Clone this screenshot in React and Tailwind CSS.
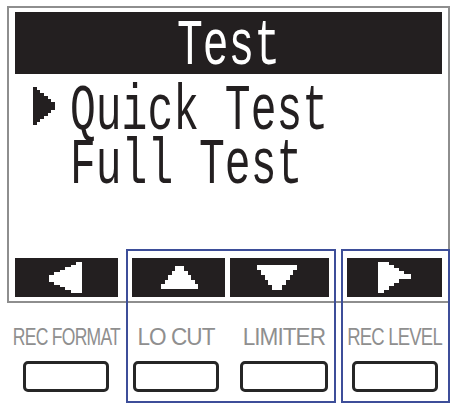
import React from 'react';

// stepped edge between two points, LCD-pixel style
const stair = (x0, y0, x1, y1, n) => {
  const pts = [];
  for (let i = 0; i < n; i++) {
    const x = x0 + ((x1 - x0) * (i + 1)) / n;
    pts.push([x, y0 + ((y1 - y0) * i) / n], [x, y0 + ((y1 - y0) * (i + 1)) / n]);
  }
  return pts;
};

const toPoints = (pts) => pts.map(([x, y]) => `${x},${y}`).join(' ');

const LeftArrow = () => {
  const pts = [
    [27, 0], [33, 0], [33, 31], [27, 31],
    ...stair(27, 31, 0, 17, 5),
    [0, 13],
    ...stair(0, 13, 27, 0, 5),
  ];
  return (
    <svg width="34" height="31" viewBox="0 0 34 31" shapeRendering="crispEdges">
      <polygon points={toPoints(pts)} fill="#fff" />
    </svg>
  );
};

const RightArrow = () => {
  const pts = [
    [0, 0], [6, 0],
    ...stair(6, 0, 26, 12, 4),
    [33, 12], [33, 17], [26, 17],
    ...stair(26, 17, 6, 31, 4),
    [0, 31],
  ];
  return (
    <svg width="34" height="31" viewBox="0 0 34 31" shapeRendering="crispEdges">
      <polygon points={toPoints(pts)} fill="#fff" />
    </svg>
  );
};

const UpArrow = () => {
  const pts = [
    [17, 0], [23, 0],
    ...stair(23, 0, 40, 23, 5),
    [0, 23],
    ...stair(0, 23, 17, 0, 5),
  ];
  return (
    <svg width="40" height="23" viewBox="0 0 40 23" shapeRendering="crispEdges">
      <polygon points={toPoints(pts)} fill="#fff" />
    </svg>
  );
};

const DownArrow = () => {
  const pts = [
    [0, 0], [44, 0],
    ...stair(44, 0, 25, 25, 5),
    [19, 25],
    ...stair(19, 25, 0, 0, 5),
  ];
  return (
    <svg width="44" height="25" viewBox="0 0 44 25" shapeRendering="crispEdges">
      <polygon points={toPoints(pts)} fill="#fff" />
    </svg>
  );
};

const Cursor = () => (
  <svg width="22" height="41" viewBox="0 0 22 41" shapeRendering="crispEdges">
    <polygon
      points={toPoints([[0, 0], ...stair(0, 0, 22, 18, 6), [22, 23], ...stair(22, 23, 0, 41, 6)])}
      fill="#231f20"
    />
  </svg>
);

const lcd =
  "font-['Liberation_Mono',monospace] text-[43px] leading-[30px] inline-block scale-y-[1.5] translate-y-[4px]";

const softKeys = [
  { label: 'REC FORMAT', ml: 'ml-[16px]', btn: 'w-[86px]', sx: 'scale-x-[0.73]' },
  { label: 'LO CUT', ml: 'ml-[10px]', btn: 'w-[86px]', sx: 'scale-x-[0.94]' },
  { label: 'LIMITER', ml: 'ml-[8px]', btn: 'w-[88px]', sx: 'scale-x-[0.94]' },
  { label: 'REC LEVEL', ml: 'ml-[11px]', btn: 'w-[86px]', sx: 'scale-x-[0.77]' },
];

export default function App() {
  return (
    <div className="relative w-[456px] h-[409px] bg-white overflow-hidden">
      {/* LCD screen */}
      <div className="ml-[7px] mt-[6px] w-[443px] h-[297px] border-2 border-[#8e8e8e] flex flex-col px-[6px] pt-[4px] pb-[4px]">
        <div className="h-[62px] bg-[#231f20] flex items-center justify-center text-white">
          <span className={lcd}>Test</span>
        </div>

        <div className="flex items-center mt-[13px] h-[41px]">
          <div className="ml-[18px] flex">
            <Cursor />
          </div>
          <span className={`${lcd} ml-[15px] text-[#231f20]`}>Quick Test</span>
        </div>
        <div className="flex items-center mt-[12px] h-[44px]">
          <span className={`${lcd} ml-[55px] text-[#231f20]`}>Full Test</span>
        </div>

        <div className="mt-auto flex h-[39px]">
          <div className="w-[103px] bg-[#231f20] flex items-center justify-center">
            <LeftArrow />
          </div>
          <div className="ml-[14px] w-[93px] bg-[#231f20] flex items-center justify-center">
            <UpArrow />
          </div>
          <div className="ml-[5px] w-[100px] bg-[#231f20] flex items-center justify-center">
            <DownArrow />
          </div>
          <div className="ml-[18px] w-[95px] bg-[#231f20] flex items-center justify-center">
            <RightArrow />
          </div>
        </div>
      </div>

      {/* key labels and buttons */}
      <div className="flex mt-[22px]">
        {softKeys.map((k) => (
          <div key={k.label} className={`w-[100px] ${k.ml} flex flex-col items-center`}>
            <span
              className={`font-['Liberation_Sans',sans-serif] text-[24px] leading-[24px] text-[#8f8f8f] whitespace-nowrap inline-block tracking-[-1px] ${k.sx}`}
            >
              {k.label}
            </span>
            <div className={`${k.btn} mt-[12px] h-[31px] border-[3px] border-[#262626] rounded-[5px]`} />
          </div>
        ))}
      </div>

      {/* highlight frames over the keys */}
      <div className="absolute left-[126px] top-[249px] w-[210px] h-[154px] border-2 border-[#3d4e99]" />
      <div className="absolute left-[341px] top-[249px] w-[109px] h-[154px] border-2 border-[#3d4e99]" />
    </div>
  );
}
